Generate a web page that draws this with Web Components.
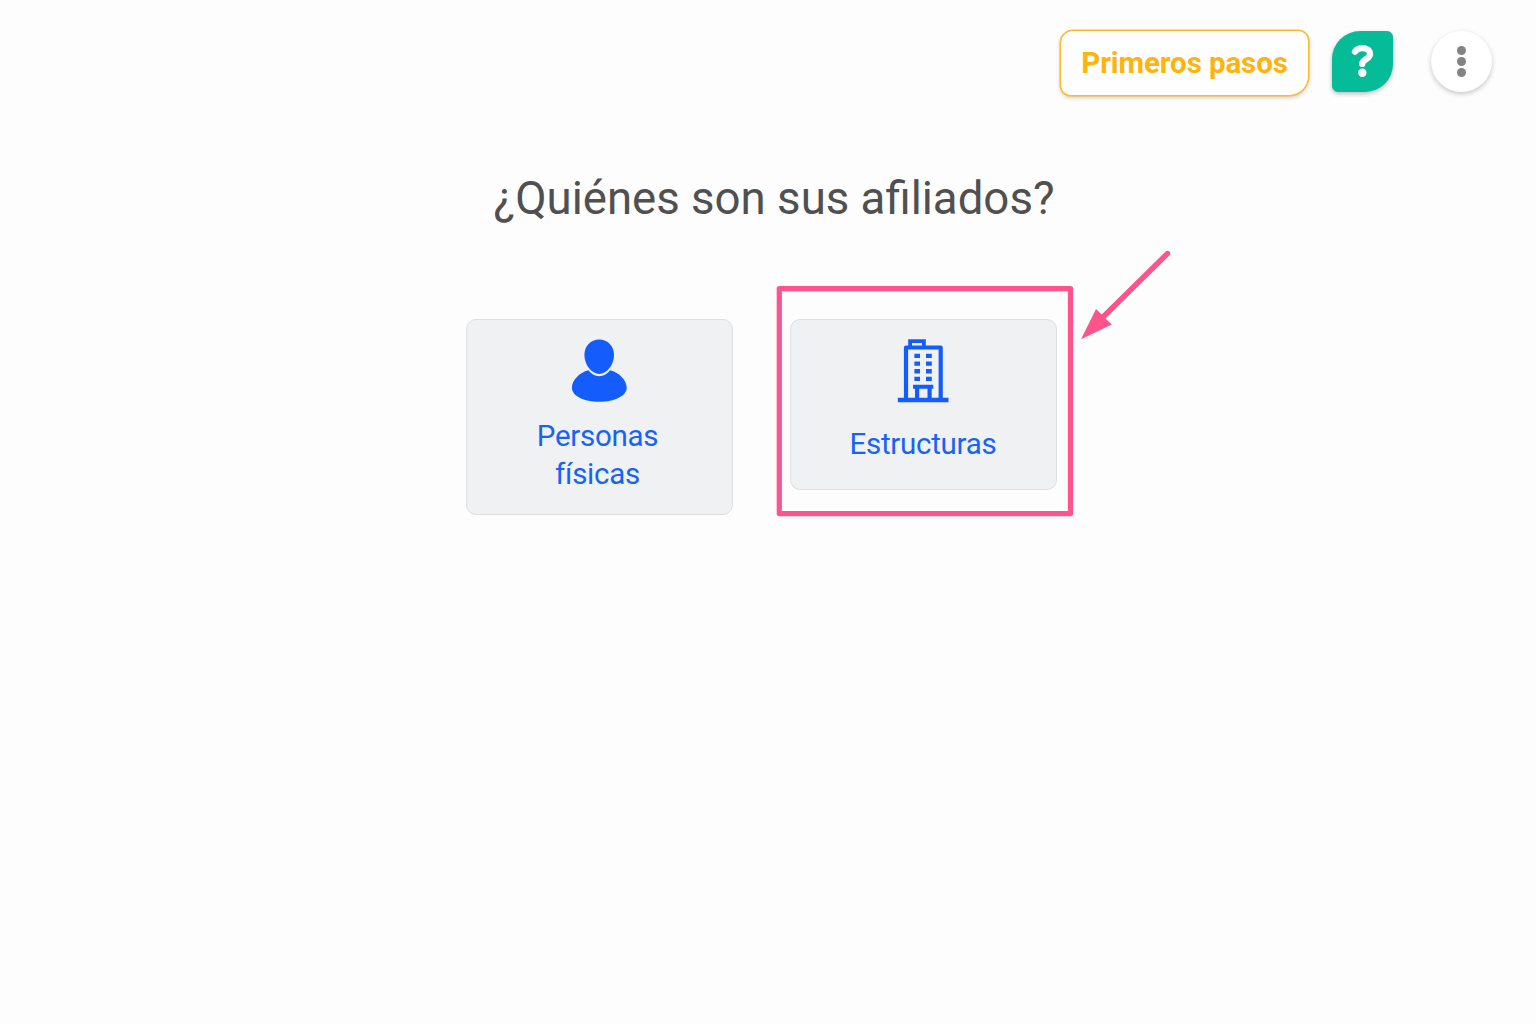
<!DOCTYPE html>
<html lang="es">
<head>
<meta charset="UTF-8">
<title>Afiliados</title>
<style>
    body {
        margin: 0;
        background: #fdfdfd;
        font-family: Roboto, "Liberation Sans", sans-serif;
    }
</style>
</head>
<body>
<app-page>
    <app-toolbar slot="toolbar">
        <steps-button>Primeros pasos</steps-button>
        <help-button></help-button>
        <more-button></more-button>
    </app-toolbar>
    <choice-list heading="¿Quiénes son sus afiliados?">
        <choice-card icon="person">Personas físicas</choice-card>
        <highlight-box>
            <choice-card icon="building">Estructuras</choice-card>
        </highlight-box>
    </choice-list>
</app-page>

<script>
class AppPage extends HTMLElement {
    constructor() {
        super();
        this.attachShadow({ mode: 'open' });
    }

    connectedCallback() {
        this.shadowRoot.innerHTML = `
            <style>
                :host {
                    display: flex;
                    flex-direction: column;
                    height: 1024px;
                    overflow: hidden;
                }
            </style>
            <slot name="toolbar"></slot>
            <slot></slot>
        `;
    }
}

class AppToolbar extends HTMLElement {
    constructor() {
        super();
        this.attachShadow({ mode: 'open' });
    }

    connectedCallback() {
        this.shadowRoot.innerHTML = `
            <style>
                :host {
                    display: flex;
                    justify-content: flex-end;
                    align-items: flex-start;
                    box-sizing: border-box;
                    height: 126px;
                    padding: 30px 44px 0 0;
                }
            </style>
            <slot></slot>
        `;
    }
}

class StepsButton extends HTMLElement {
    constructor() {
        super();
        this.attachShadow({ mode: 'open' });
    }

    connectedCallback() {
        this.shadowRoot.innerHTML = `
            <style>
                :host { display: block; margin-right: 23px; }
                button {
                    display: block;
                    box-sizing: border-box;
                    width: 249px;
                    height: 66px;
                    padding: 0;
                    border: 1px solid #fdb92b;
                    border-radius: 13px 11px 20px 11px;
                    background: #fefefe;
                    box-shadow: 0 0 0 0.5px #fdb92b, 0 2px 4px rgba(0, 0, 0, 0.18);
                    color: #feb30d;
                    font: 700 29.5px/64px Roboto, "Liberation Sans", sans-serif;
                    letter-spacing: -0.1px;
                    white-space: nowrap;
                }
            </style>
            <button><slot></slot></button>
        `;
    }
}

class HelpButton extends HTMLElement {
    constructor() {
        super();
        this.attachShadow({ mode: 'open' });
    }

    connectedCallback() {
        this.shadowRoot.innerHTML = `
            <style>
                :host { display: block; margin: 1px 38px 0 0; }
                button {
                    display: block;
                    width: 61px;
                    height: 61px;
                    padding: 0;
                    border: 0;
                    border-radius: 28px 6px 28px 6px;
                    background: #06bb97;
                    box-shadow: 0 2px 4px rgba(0, 0, 0, 0.25);
                }
                svg { display: block; }
            </style>
            <button aria-label="Ayuda">
                <svg width="61" height="61" viewBox="0 0 61 61">
                    <path d="M23 20.6C24.8 18.3 27.2 17.2 30.4 17.2C34.9 17.2 38 19.4 38 23C38 28.3 30.2 28.2 30.2 32.9" fill="none" stroke="#fff" stroke-width="6.3" stroke-linecap="round" stroke-linejoin="round"/>
                    <circle cx="30.3" cy="41.8" r="4.2" fill="#fff"/>
                </svg>
            </button>
        `;
    }
}

class MoreButton extends HTMLElement {
    constructor() {
        super();
        this.attachShadow({ mode: 'open' });
    }

    connectedCallback() {
        this.shadowRoot.innerHTML = `
            <style>
                :host { display: block; margin-top: 1px; }
                button {
                    display: flex;
                    flex-direction: column;
                    align-items: center;
                    justify-content: center;
                    gap: 2px;
                    width: 61px;
                    height: 61px;
                    padding: 0 1px 1px 0;
                    border: 0;
                    border-radius: 50%;
                    background: #fff;
                    box-shadow: 0 2px 5px rgba(0, 0, 0, 0.22);
                }
                i {
                    width: 9px;
                    height: 9px;
                    border-radius: 50%;
                    background: #838383;
                }
            </style>
            <button aria-label="Más"><i></i><i></i><i></i></button>
        `;
    }
}

class ChoiceList extends HTMLElement {
    constructor() {
        super();
        this.attachShadow({ mode: 'open' });
    }

    connectedCallback() {
        this.shadowRoot.innerHTML = `
            <style>
                :host {
                    display: flex;
                    flex-direction: column;
                    align-items: center;
                    padding: 43px 0 0 12px;
                }
                h1 {
                    margin: 0;
                    color: #505050;
                    font-size: 45.6px;
                    font-weight: 400;
                    line-height: 60px;
                    white-space: nowrap;
                }
                .row {
                    display: flex;
                    align-items: flex-start;
                    gap: 57px;
                    margin: 90px 26px 0 0;
                }
            </style>
            <h1>${this.getAttribute('heading')}</h1>
            <div class="row"><slot></slot></div>
        `;
    }
}

const icons = {
    person: `
        <svg width="56" height="64" viewBox="0 0 56 64" fill="#145cfb">
            <path d="M28.2 .5C36.8 .5 43 7 43 16C43 25.5 36 35 28.2 35C20.4 35 13.4 25.5 13.4 16C13.4 7 19.6 .5 28.2 .5Z"/>
            <path d="M17.4 31.3C20.6 35.2 24 37.3 28.2 37.3C32.4 37.3 36 35.2 39.2 31.3C48.3 33.6 55.7 41.5 55.7 48.8C55.7 57 43.6 62.8 28.3 62.8C13 62.8 .9 57 .9 48.8C.9 41.5 8.3 33.6 17.4 31.3Z"/>
        </svg>`,
    building: `
        <svg width="52" height="64" viewBox="0 0 52 64" fill="#145cfb">
            <path d="M11.2 .3H28.8V8.5H11.2ZM15 4V7H25V4Z" fill-rule="evenodd"/>
            <path d="M9 59V8.5H43.7V59" fill="none" stroke="#145cfb" stroke-width="4.2" stroke-linejoin="round"/>
            <path d="M.8 58.7H51.5V63.2H.8Z"/>
            <path d="M17.4 14.7H23V19H17.4ZM29 14.7H34.8V19H29ZM17.4 22.4H23V26.7H17.4ZM29 22.4H34.8V26.7H29ZM17.4 30.1H23V34.4H17.4ZM29 30.1H34.8V34.4H29ZM17.4 37.8H23V42.1H17.4ZM29 37.8H34.8V42.1H29Z"/>
            <path d="M16 45.8H36.3V49.8H34.7V59H30.5V49.8H22.2V59H18V49.8H16Z"/>
        </svg>`
};

class ChoiceCard extends HTMLElement {
    constructor() {
        super();
        this.attachShadow({ mode: 'open' });
    }

    connectedCallback() {
        const icon = this.getAttribute('icon');
        const single = icon === 'building';

        this.shadowRoot.innerHTML = `
            <style>
                :host {
                    display: flex;
                    flex-direction: column;
                    align-items: center;
                    box-sizing: border-box;
                    width: 267px;
                    height: ${single ? 171 : 196}px;
                    padding-top: 19px;
                    border: 1px solid #dedfe1;
                    border-radius: 10px;
                    background: #f0f1f3;
                }
                svg { display: block; }
                .label {
                    width: 168px;
                    margin: ${single ? '22px 0 0' : '14px 3px 0 0'};
                    color: #1763f6;
                    font-size: 29.5px;
                    line-height: 38px;
                    letter-spacing: -0.27px;
                    text-align: center;
                }
            </style>
            ${icons[icon]}
            <div class="label"><slot></slot></div>
        `;
    }
}

class HighlightBox extends HTMLElement {
    constructor() {
        super();
        this.attachShadow({ mode: 'open' });
    }

    // frame and arrow lie over the page around the slotted card
    connectedCallback() {
        this.shadowRoot.innerHTML = `
            <style>
                :host { display: block; position: relative; }
                svg {
                    position: absolute;
                    left: -20px;
                    top: -79px;
                    pointer-events: none;
                }
            </style>
            <slot></slot>
            <svg width="410" height="286" viewBox="770 240 410 286">
                <rect x="779.3" y="288.6" width="291.2" height="225" fill="none" stroke="#fe548b" stroke-width="5.2" stroke-linejoin="round"/>
                <path d="M1167.5 253.5L1102 318" fill="none" stroke="#fe548b" stroke-width="5.4" stroke-linecap="round"/>
                <path d="M1081 339.2L1096 309L1111.8 324.6Z" fill="#fe548b"/>
            </svg>
        `;
    }
}

customElements.define('app-page', AppPage);
customElements.define('app-toolbar', AppToolbar);
customElements.define('steps-button', StepsButton);
customElements.define('help-button', HelpButton);
customElements.define('more-button', MoreButton);
customElements.define('choice-list', ChoiceList);
customElements.define('choice-card', ChoiceCard);
customElements.define('highlight-box', HighlightBox);
</script>
</body>
</html>
